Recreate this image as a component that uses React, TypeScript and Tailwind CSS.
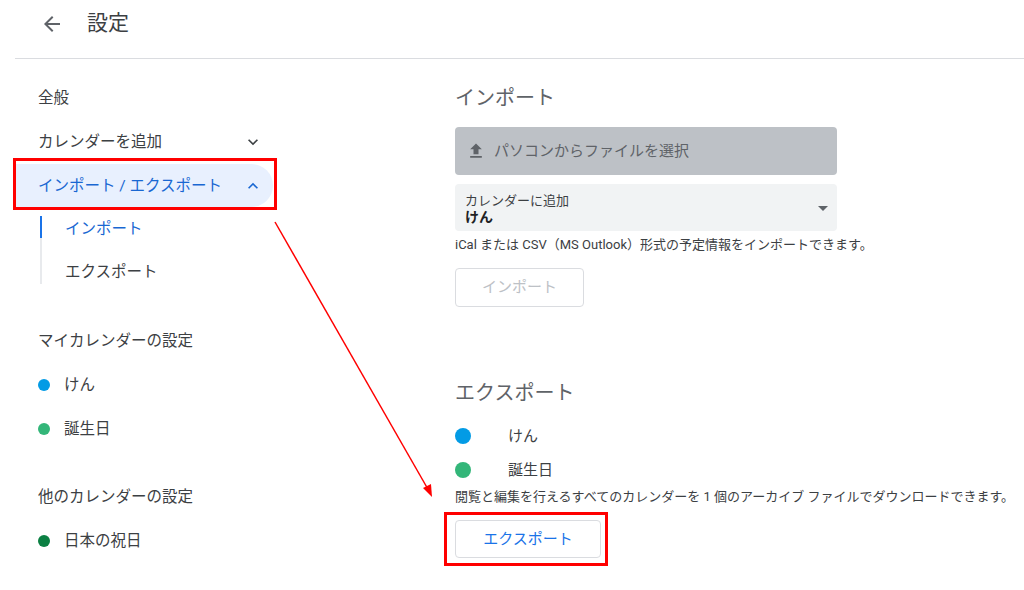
import React from 'react';

const FONT = { fontFamily: "Roboto, 'Noto Sans CJK JP', sans-serif" };

function ChevronDown({ className = '' }: { className?: string }) {
  return (
    <svg viewBox="0 0 24 24" width="20" height="20" className={className} fill="currentColor">
      <path d="M16.59 8.59 12 13.17 7.41 8.59 6 10l6 6 6-6z" />
    </svg>
  );
}

function ChevronUp({ className = '' }: { className?: string }) {
  return (
    <svg viewBox="0 0 24 24" width="20" height="20" className={className} fill="currentColor">
      <path d="M12 8l-6 6 1.41 1.41L12 10.83l4.59 4.58L18 14z" />
    </svg>
  );
}

function NavRow({ children, className = '' }: { children: React.ReactNode; className?: string }) {
  return <div className={`h-11 flex items-center pl-[23px] text-[15.5px] text-[#3c4043] ${className}`}>{children}</div>;
}

function Dot({ color, size = 'w-3 h-3' }: { color: string; size?: string }) {
  return <span className={`${size} rounded-full shrink-0 ${color}`} />;
}

export default function App() {
  return (
    <div className="relative w-[1024px] h-[590px] bg-white overflow-hidden" style={FONT}>
      {/* Header */}
      <div className="ml-[15px] h-[59px] border-b border-[#dadce0] flex items-center pb-[11px]">
        <button className="ml-[25px] w-6 h-6 text-[#5f6368]">
          <svg viewBox="0 0 24 24" width="24" height="24" fill="currentColor">
            <path d="M20 11H7.83l5.59-5.59L12 4l-8 8 8 8 1.41-1.41L7.83 13H20v-2z" />
          </svg>
        </button>
        <h1 className="ml-[23px] text-[21px] text-[#3c4043]">設定</h1>
      </div>

      <div className="flex">
        {/* Sidebar */}
        <nav className="w-[455px] shrink-0 pl-[15px] pt-[17px]">
          <NavRow className="pt-[2px]">全般</NavRow>
          <NavRow className="justify-between w-[258px] pr-[10px]">
            <span className="pt-[2px]">カレンダーを追加</span>
            <ChevronDown className="text-[#3c4043]" />
          </NavRow>
          <div className="relative w-[258px]">
            <div className="h-[43px] flex items-center justify-between pl-[23px] pr-[10px] bg-[#e8f0fe] rounded-r-full text-[15.5px] text-[#1967d2]">
              <span className="pt-[2px]">インポート / エクスポート</span>
              <ChevronUp />
            </div>
            <div className="absolute left-[-2px] top-[-6px] right-[-4px] bottom-[-3px] border-[3px] border-[#ff0000]" />
          </div>
          <div className="ml-[25px] mt-[9px] h-[68px] border-l-2 border-[#e8eaed]">
            <div className="-ml-[2px] h-[22px] border-l-2 border-[#1a73e8] flex items-center pl-[23px] pt-[6px] text-[15.5px] text-[#1967d2]">
              インポート
            </div>
            <div className="mt-[21px] h-[24px] flex items-center pl-[23px] pt-[4px] text-[15.5px] text-[#3c4043]">エクスポート</div>
          </div>

          <div className="mt-[35px]">
            <NavRow className="pt-[2px]">マイカレンダーの設定</NavRow>
            <NavRow className="gap-[14px]">
              <Dot color="bg-[#039be5]" />
              <span className="pt-[2px]">けん</span>
            </NavRow>
            <NavRow className="gap-[14px]">
              <Dot color="bg-[#33b679]" />
              <span className="pt-[2px]">誕生日</span>
            </NavRow>
          </div>

          <div className="mt-[24px]">
            <NavRow className="pt-[2px]">他のカレンダーの設定</NavRow>
            <NavRow className="gap-[14px]">
              <Dot color="bg-[#0b8043]" />
              <span className="pt-[2px]">日本の祝日</span>
            </NavRow>
          </div>
        </nav>

        {/* Content */}
        <main className="pt-[17px]">
          <h2 className="h-11 flex items-center text-[20px] text-[#5f6368]">インポート</h2>
          <button className="mt-[7px] w-[382px] h-12 rounded bg-[#bdc1c6] flex items-center pl-[11px] gap-[8px] text-[15px] text-[#5f6368]">
            <svg viewBox="0 0 24 24" width="20" height="20" fill="currentColor">
              <path d="M5 20h14v-2H5v2zm0-10h4v6h6v-6h4l-7-7-7 7z" />
            </svg>
            <span>パソコンからファイルを選択</span>
          </button>
          <div className="mt-[9px] w-[382px] h-[47px] rounded bg-[#f1f3f4] flex items-center justify-between pl-[10px] pr-[2px]">
            <div className="flex flex-col leading-[16px] pt-[2px]">
              <span className="text-[13px] text-[#3c4043]">カレンダーに追加</span>
              <span className="text-[14px] font-bold text-[#202124]">けん</span>
            </div>
            <svg viewBox="0 0 24 24" width="24" height="24" fill="#5f6368">
              <path d="M7 10l5 5 5-5z" />
            </svg>
          </div>
          <p className="mt-[6px] text-[13px] text-[#3c4043] leading-[16px] whitespace-nowrap">
            iCal または CSV（MS Outlook）形式の予定情報をインポートできます。
          </p>
          <button className="mt-[15px] w-[129px] h-[39px] rounded border border-[#dadce0] text-[15px] text-[#bdc1c6]">
            インポート
          </button>

          <h2 className="mt-[64px] h-11 flex items-center text-[20px] text-[#5f6368]">エクスポート</h2>
          <div className="mt-[4px] flex items-center h-[34px] text-[15px] text-[#3c4043]">
            <Dot color="bg-[#039be5]" size="w-4 h-4" />
            <span className="ml-[37px]">けん</span>
          </div>
          <div className="flex items-center h-[34px] text-[15px] text-[#3c4043]">
            <Dot color="bg-[#33b679]" size="w-4 h-4" />
            <span className="ml-[37px]">誕生日</span>
          </div>
          <p className="mt-[2px] text-[13px] text-[#3c4043] leading-[16px] whitespace-nowrap">
            閲覧と編集を行えるすべてのカレンダーを 1 個のアーカイブ ファイルでダウンロードできます。
          </p>
          <div className="relative mt-[15px] w-[146px]">
            <button className="w-[146px] h-[38px] rounded border border-[#dadce0] text-[15px] text-[#1a73e8]">
              エクスポート
            </button>
            <div className="absolute left-[-11px] top-[-8px] right-[-7px] bottom-[-8px] border-[3px] border-[#ff0000]" />
          </div>
        </main>
      </div>

      {/* Annotation arrow */}
      <svg className="absolute inset-0 pointer-events-none" width="1024" height="590">
        <line x1="275" y1="222" x2="429" y2="491" stroke="#ff0000" strokeWidth="1.5" />
        <polygon points="432,497 423,488 431,484" fill="#ff0000" />
      </svg>
    </div>
  );
}
